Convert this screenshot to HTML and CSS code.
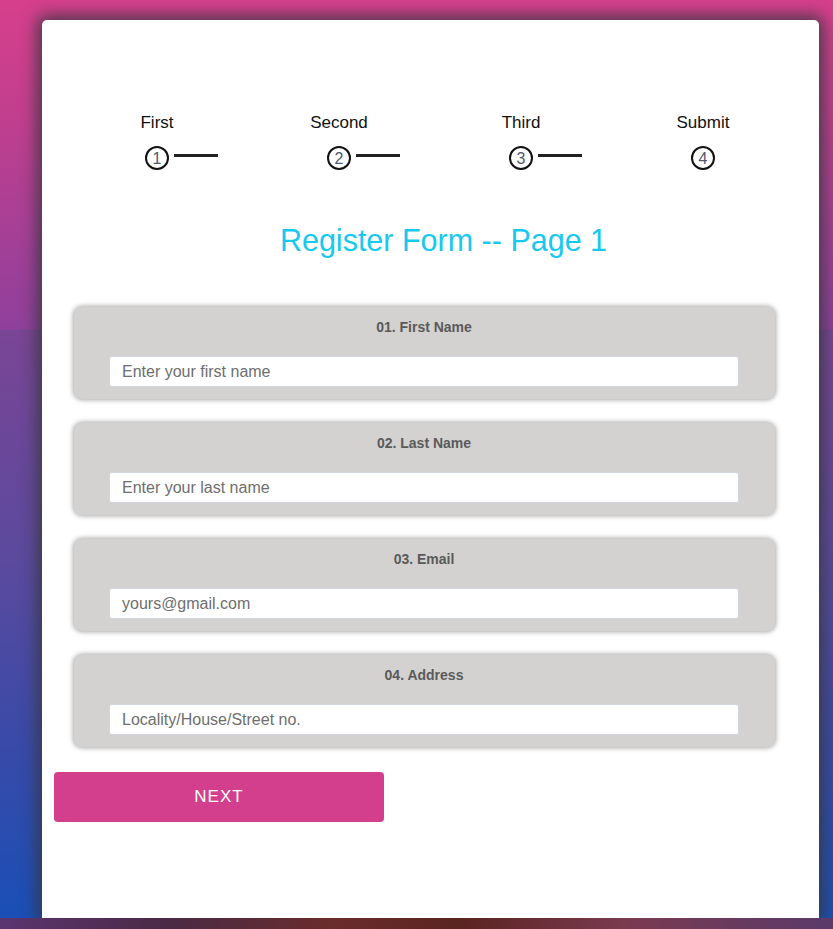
FILE: index.html
```html
<!DOCTYPE html>
<html>
<head>
<meta charset="utf-8">
<title>Register Form</title>
<link rel="stylesheet" href="styles.css">
</head>
<body>
<div class="page">
  <div class="card">
    <div class="steps">
      <div class="step"><span class="step-label">First</span><span class="step-num has-line">1</span></div>
      <div class="step"><span class="step-label">Second</span><span class="step-num has-line">2</span></div>
      <div class="step"><span class="step-label">Third</span><span class="step-num has-line">3</span></div>
      <div class="step"><span class="step-label">Submit</span><span class="step-num">4</span></div>
    </div>
    <h1 class="title">Register Form -- Page 1</h1>
    <form class="form">
      <div class="field">
        <label class="field-label">01. First Name</label>
        <input class="field-input" type="text" placeholder="Enter your first name">
      </div>
      <div class="field">
        <label class="field-label">02. Last Name</label>
        <input class="field-input" type="text" placeholder="Enter your last name">
      </div>
      <div class="field">
        <label class="field-label">03. Email</label>
        <input class="field-input" type="text" placeholder="yours@gmail.com">
      </div>
      <div class="field">
        <label class="field-label">04. Address</label>
        <input class="field-input" type="text" placeholder="Locality/House/Street no.">
      </div>
      <button class="next-btn" type="button">NEXT</button>
    </form>
  </div>
</div>
<div class="band"></div>
</body>
</html>
```

FILE: styles.css
```css
html, body {
  margin: 0;
  padding: 0;
}
body {
  width: 833px;
  height: 929px;
  overflow: hidden;
  font-family: "Liberation Sans", Arial, sans-serif;
  background: linear-gradient(to bottom, #d73f8c 0px, #c03f8e 120px, #8f409c 329px, #7a4595 330px, #5b4a9e 560px, #3a4aa8 740px, #1a4fb6 918px);
}
.page {
  padding: 20px 14px 0 42px;
  height: 898px;
  box-sizing: content-box;
}
.card {
  height: 898px;
  background: #ffffff;
  border-radius: 5px 5px 0 0;
  box-shadow: 0 0 16px 5px rgba(55, 55, 65, 0.85);
  padding: 93px 0 0 0;
  box-sizing: border-box;
}
.steps {
  display: flex;
  padding: 0 24px;
}
.step {
  width: 182px;
  display: flex;
  flex-direction: column;
  align-items: center;
}
.step-label {
  font-size: 17px;
  line-height: 20px;
  color: #111;
}
.step-num {
  position: relative;
  margin-top: 13px;
  width: 24px;
  height: 24px;
  box-sizing: border-box;
  border: 2px solid #111;
  border-radius: 50%;
  font-size: 16px;
  line-height: 21px;
  text-align: center;
  color: #4f5a6e;
}
.has-line::after {
  content: "";
  position: absolute;
  left: 27px;
  top: 6px;
  width: 44px;
  height: 3px;
  background: #222;
}
.title {
  margin: 52px 0 0 0;
  padding-left: 26px;
  font-size: 30.5px;
  line-height: 36px;
  font-weight: normal;
  text-align: center;
  color: #17c8ef;
}
.form {
  margin: 49px 0 0 0;
  display: flex;
  flex-direction: column;
}
.field {
  margin: 0 44px 24px 32px;
  background: #d3d2d1;
  border-radius: 8px;
  box-shadow: 0 0 5px 1px rgba(0, 0, 0, 0.35);
  padding: 12px 36px 12px 35px;
  display: flex;
  flex-direction: column;
  align-items: stretch;
}
.field-label {
  font-size: 14px;
  line-height: 16px;
  font-weight: bold;
  color: #5a5a5a;
  text-align: center;
}
.field-input {
  margin-top: 21px;
  height: 31px;
  box-sizing: border-box;
  border: 1px solid #d2d6de;
  border-radius: 3px;
  background: #fff;
  padding: 0 12px;
  font-family: "Liberation Sans", Arial, sans-serif;
  font-size: 16px;
  color: #333;
  outline: none;
}
.field-input::placeholder {
  color: #6e6e6e;
  opacity: 1;
}
.next-btn {
  margin: 1px 0 0 12px;
  width: 330px;
  height: 50px;
  border: none;
  border-radius: 4px;
  background: #d33f8c;
  color: #ffffff;
  font-family: "Liberation Sans", Arial, sans-serif;
  font-size: 17px;
  letter-spacing: 1px;
  cursor: pointer;
}
.band {
  height: 11px;
  background: linear-gradient(to right, #5b3570 0%, #4a2a45 20%, #6a2c2c 40%, #5a2420 55%, #7a3a50 75%, #5a3a6a 100%);
}
```
